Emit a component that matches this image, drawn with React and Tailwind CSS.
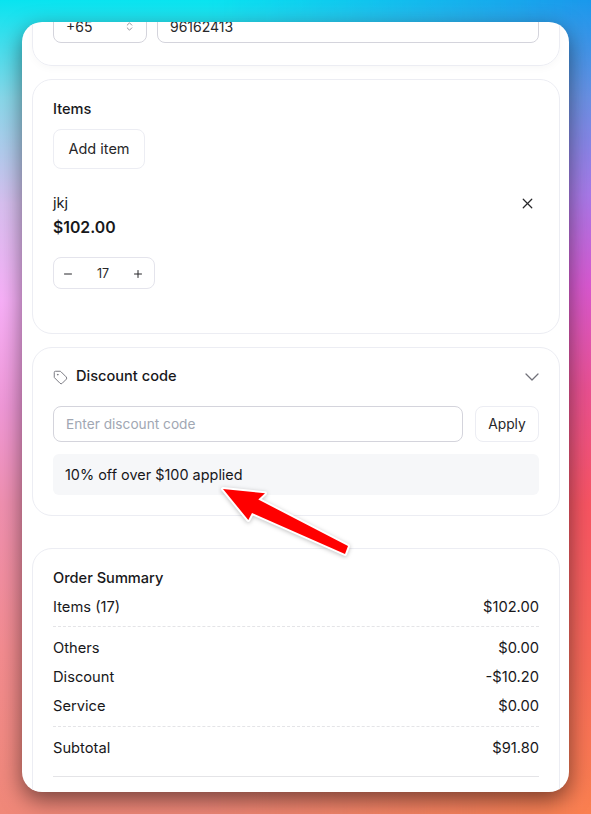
import React from "react";
import { ChevronDown, ChevronsUpDown, Minus, Plus, Tag, X } from "lucide-react";

const Row = ({ label, value }) => (
  <div className="flex justify-between text-[14.7px] leading-[21px] text-[#18181b]">
    <span>{label}</span>
    <span>{value}</span>
  </div>
);

const App = () => {
  return (
    <div className="relative h-[814px] w-[591px] overflow-hidden bg-[linear-gradient(to_bottom,#1a98ec_0%,#6a90e4_12%,#a878e8_24%,#d858d0_35%,#ea5090_48%,#f85462_62%,#f86a58_82%,#fa8050_100%)] font-['Inter',sans-serif]">
      <div className="absolute inset-0 bg-[linear-gradient(to_bottom,#08e4f0_0%,#88d8ea_12%,#d8c0f0_25%,#f8b0f8_37%,#f098d8_50%,#f090b0_62%,#f48c90_80%,#f08878_100%)] [mask-image:linear-gradient(to_right,black_35%,transparent_100%)]"></div>

      <div className="relative m-[22px] h-[770px] w-[547px] overflow-hidden rounded-[20px] bg-white pr-[9px] pl-[10px] shadow-[0_8px_22px_rgba(0,0,0,0.5)]">
        <div className="-mt-[63px] flex flex-col">
          <div className="rounded-b-[20px] border border-[#ecedf3] px-5 pt-[50px] pb-[22px] shadow-[0_2px_8px_rgba(0,0,0,0.03)]">
            <div className="flex gap-[10px]">
              <div className="flex h-[33px] w-[94px] items-center justify-between rounded-[8px] border border-[#d4d4dc] pr-[11px] pl-3 text-[14px] text-[#27272a]">
                <span>+65</span>
                <ChevronsUpDown className="size-[11px] text-[#8a8a94]" />
              </div>
              <div className="flex h-[33px] flex-1 items-center rounded-[8px] border border-[#d4d4dc] px-3 text-[14px] text-[#27272a]">
                96162413
              </div>
            </div>
          </div>

          <div className="mt-[13px] h-[255px] rounded-[20px] border border-[#ecedf3] px-5 pt-[19px]">
            <h2 className="text-[14.6px] leading-[20px] font-medium text-[#18181b]">Items</h2>
            <button className="mt-[10px] h-10 w-[92px] rounded-[8px] border border-[#ecedf3] text-[14.5px] font-normal text-[#27272a]">
              Add item
            </button>
            <div className="mt-[24px] flex items-start justify-between">
              <div>
                <p className="text-[14.6px] leading-[21px] text-[#18181b]">jkj</p>
                <p className="mt-[2px] text-[15.8px] leading-[24px] font-semibold text-[#18181b]">$102.00</p>
              </div>
              <X className="mt-[2px] mr-[3px] size-[17px] text-[#27272a]" strokeWidth={1.75} />
            </div>
            <div className="mt-[17px] flex h-8 w-[102px] items-center justify-between rounded-[8px] border border-[#e4e4ec] pt-[2px] pr-[10px] pl-[8px] text-[12.5px] text-[#27272a]">
              <Minus className="size-3" />
              <span>17</span>
              <Plus className="size-3" />
            </div>
          </div>

          <div className="mt-[13px] h-[169px] rounded-[20px] border border-[#ecedf3] px-5 pt-[19px]">
            <div className="flex h-5 items-center">
              <Tag className="size-[15px] text-[#71717a]" strokeWidth={1.5} />
              <span className="ml-[8px] text-[14.6px] font-medium text-[#18181b]">Discount code</span>
              <ChevronDown className="-mr-[5px] ml-auto size-6 text-[#71717a]" strokeWidth={1.25} />
            </div>
            <div className="mt-[19px] flex gap-3">
              <div className="flex h-9 flex-1 items-center rounded-[8px] border border-[#d4d4dc] px-3 text-[13.7px] text-[#a1a7b3]">
                Enter discount code
              </div>
              <button className="h-9 w-16 rounded-[8px] border border-[#ecedf3] text-[13.8px] font-normal text-[#27272a]">
                Apply
              </button>
            </div>
            <div className="mt-[12px] flex h-[41px] items-center rounded-[6px] bg-[#f6f7f9] px-3 pt-px text-[14.45px] text-[#18181b]">
              10% off over $100 applied
            </div>
          </div>

          <div className="mt-[32px] rounded-[20px] border border-[#ecedf3] px-5 pt-[19px] pb-10">
            <h2 className="text-[14.6px] leading-[20px] font-medium text-[#18181b]">Order Summary</h2>
            <div className="mt-[9px]">
              <Row label="Items (17)" value="$102.00" />
            </div>
            <div className="mt-[8px] flex flex-col gap-[8px] border-t border-dashed border-[#e4e4e7] pt-[11px]">
              <Row label="Others" value="$0.00" />
              <Row label="Discount" value="-$10.20" />
              <Row label="Service" value="$0.00" />
            </div>
            <div className="mt-[9px] border-t border-dashed border-[#e4e4e7] pt-[11px]">
              <Row label="Subtotal" value="$91.80" />
            </div>
            <div className="mt-[17px] border-t border-[#e4e4e7]"></div>
          </div>
        </div>
      </div>

      <svg className="absolute top-[484px] left-[218px] h-[76px] w-[136px]" viewBox="0 0 136 76">
        <path
          d="M5 5 L47 9.3 L40.3 15.5 L130 62 L127 70 L34 29 L30.3 36 Z"
          fill="#ff0000"
          stroke="#ffffff"
          strokeWidth="4"
          strokeLinejoin="round"
          paintOrder="stroke"
          style={{ filter: "drop-shadow(0 1px 2px rgba(0,0,0,0.25))" }}
        />
      </svg>
    </div>
  );
};

export default App;
